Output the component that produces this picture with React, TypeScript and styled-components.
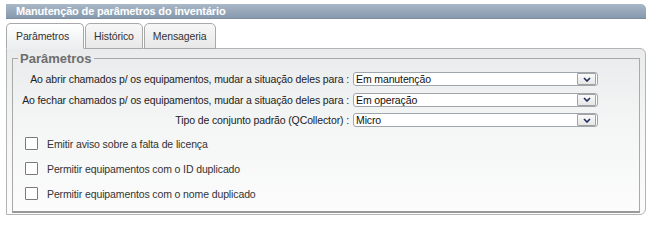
import React from "react";
import styled, { createGlobalStyle } from "styled-components";

const GlobalStyle = createGlobalStyle`
  html, body {
    margin: 0;
    padding: 0;
    background: #ffffff;
  }
  body {
    font-family: "Liberation Sans", Arial, sans-serif;
    font-size: 10.5px;
    letter-spacing: -0.12px;
    color: #222;
  }
`;

const Page = styled.div`
  padding: 4px 4px 0 6px;
  width: 640px;
`;

const TitleBar = styled.div`
  height: 14px;
  line-height: 14px;
  padding-left: 10px;
  background: linear-gradient(#aab8c7, #8799ad);
  border-bottom: 1px solid #7d8ea2;
  border-radius: 0 5px 0 0;
  color: #ffffff;
  font-weight: bold;
  font-size: 11px;
  letter-spacing: -0.15px;
`;

const TabStrip = styled.div`
  display: flex;
  gap: 1px;
  margin-top: 4px;
  position: relative;
  z-index: 1;
`;

const Tab = styled.div<{ $active?: boolean }>`
  height: 24px;
  line-height: 25px;
  padding: ${(p) => (p.$active ? "0 14px 0 9px" : "0 8px")};
  border: 1px solid #a9a9a9;
  border-bottom: ${(p) => (p.$active ? "1px solid #eceeef" : "1px solid #a9a9a9")};
  border-radius: 5px 5px 0 0;
  background: ${(p) =>
    p.$active ? "linear-gradient(#ffffff, #eceeef)" : "linear-gradient(#f7f7f7, #e8e8e8)"};
  color: #333;
  margin-bottom: -1px;
`;

const TabPanel = styled.div`
  border: 1px solid #b4b4b4;
  border-radius: 0 6px 6px 0;
  background: linear-gradient(#e9ebec, #f4f5f5 45%, #fcfcfc);
  padding: 2px 5px 1px 5px;
`;

const FieldSet = styled.fieldset`
  margin: 0;
  padding: 6px 0 11px 0;
  border: 1px solid #a9a9a9;
  border-bottom: 2px solid #999;
  min-width: 0;
`;

const Legend = styled.legend`
  margin-left: 5px;
  padding: 0 2px;
  font-size: 13px;
  line-height: 15px;
  letter-spacing: 0;
  font-weight: bold;
  color: #6e6e6e;
`;

const FormGrid = styled.div`
  display: grid;
  grid-template-columns: 336px 245px;
  column-gap: 4px;
  row-gap: 6.5px;
  align-items: center;
`;

const FieldLabel = styled.div`
  text-align: right;
  white-space: nowrap;
  color: #222;
`;

const SelectBox = styled.div`
  display: flex;
  height: 12px;
  border: 1px solid #9ea6b0;
  border-radius: 3px;
  background: #ffffff;
  padding: 0 0 0 2px;
  align-items: center;
  box-sizing: content-box;
`;

const SelectValue = styled.span`
  flex: 1;
  line-height: 12px;
  color: #111;
`;

const DropButton = styled.div`
  width: 17px;
  height: 10px;
  margin-right: 1px;
  border: 1px solid #a2a2a2;
  border-radius: 1px;
  background: linear-gradient(#fafafa, #e6e6e6);
  display: flex;
  align-items: center;
  justify-content: center;
`;

const CheckList = styled.div`
  display: flex;
  flex-direction: column;
  gap: 12px;
  margin-top: 10px;
  padding-left: 12px;
`;

const CheckRow = styled.label`
  display: flex;
  align-items: center;
  gap: 9px;
  color: #333;
`;

const CheckBox = styled.span`
  width: 11px;
  height: 11px;
  border: 1px solid #7a7a7a;
  border-radius: 1px;
  background: #ffffff;
`;

const Chevron = () => (
  <svg width="8" height="5" viewBox="0 0 8 5">
    <path d="M1 1 L4 4 L7 1" fill="none" stroke="#1e2c5c" strokeWidth="1.6" />
  </svg>
);

const Select: React.FC<{ value: string }> = ({ value }) => (
  <SelectBox>
    <SelectValue>{value}</SelectValue>
    <DropButton>
      <Chevron />
    </DropButton>
  </SelectBox>
);

const fields = [
  {
    label: "Ao abrir chamados p/ os equipamentos, mudar a situação deles para :",
    value: "Em manutenção",
  },
  {
    label: "Ao fechar chamados p/ os equipamentos, mudar a situação deles para :",
    value: "Em operação",
  },
  { label: "Tipo de conjunto padrão (QCollector) :", value: "Micro" },
];

const checks = [
  "Emitir aviso sobre a falta de licença",
  "Permitir equipamentos com o ID duplicado",
  "Permitir equipamentos com o nome duplicado",
];

const App: React.FC = () => {
  return (
    <>
      <GlobalStyle />
      <Page>
        <TitleBar>Manutenção de parâmetros do inventário</TitleBar>
        <TabStrip>
          <Tab $active>Parâmetros</Tab>
          <Tab>Histórico</Tab>
          <Tab>Mensageria</Tab>
        </TabStrip>
        <TabPanel>
          <FieldSet>
            <Legend>Parâmetros</Legend>
            <FormGrid>
              {fields.map((f) => (
                <React.Fragment key={f.label}>
                  <FieldLabel>{f.label}</FieldLabel>
                  <Select value={f.value} />
                </React.Fragment>
              ))}
            </FormGrid>
            <CheckList>
              {checks.map((c) => (
                <CheckRow key={c}>
                  <CheckBox />
                  {c}
                </CheckRow>
              ))}
            </CheckList>
          </FieldSet>
        </TabPanel>
      </Page>
    </>
  );
};

export default App;
